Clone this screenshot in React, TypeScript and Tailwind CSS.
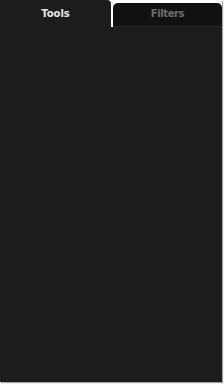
export default function App() {
  return (
    <div className="w-[224px] h-[384px] bg-white font-['DejaVu_Sans',sans-serif]">
      <div className="flex flex-col w-[222px] h-[382px] shadow-[1px_1px_1px_rgba(0,0,0,0.35)]">
        <div className="flex items-end h-[27px] bg-white">
          <div className="w-[111px] h-[27px] bg-[#1c1c1c] rounded-tr-[4px] flex items-start justify-center pt-[7px] text-[10px] leading-[14px] font-bold text-[#e8e8e8]">
            Tools
          </div>
          <div className="ml-[2px] flex-1 h-[24px] bg-[#111111] rounded-t-[5px] flex items-start justify-center pt-[4px] text-[10px] leading-[14px] tracking-[-0.4px] font-bold text-[#6e6e6e] border-b border-[#2a2a2a]">
            Filters
          </div>
        </div>
        <div className="flex-1 bg-[#1c1c1c]" />
      </div>
    </div>
  );
}
